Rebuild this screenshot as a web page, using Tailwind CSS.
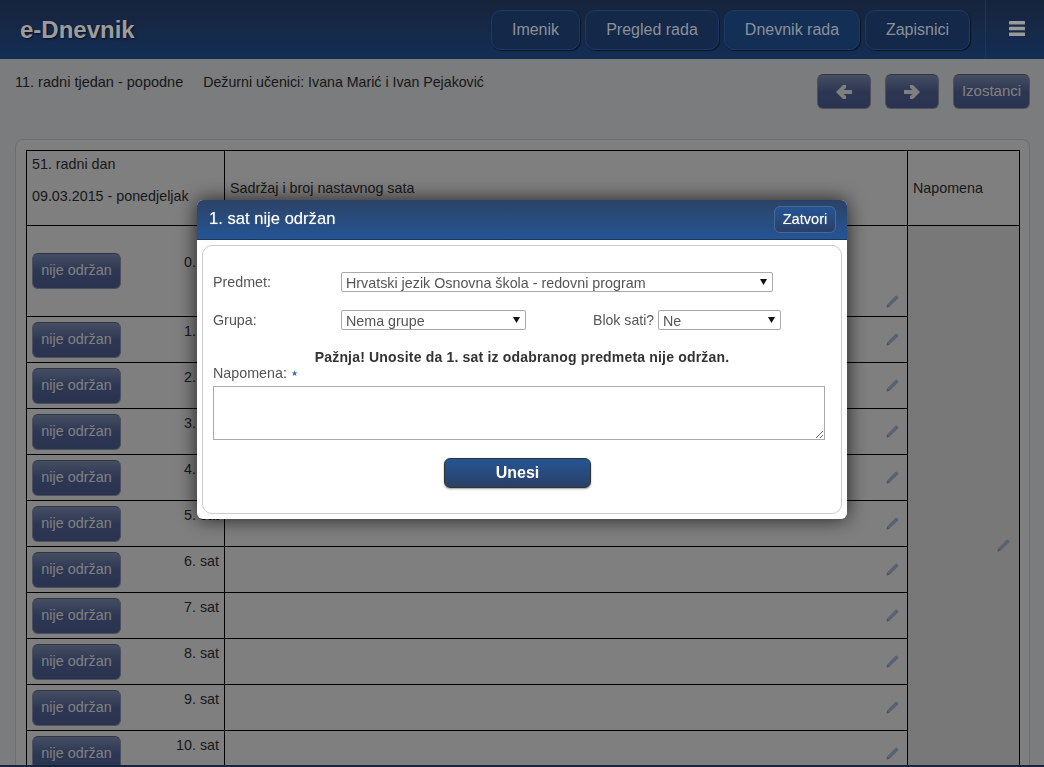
<!DOCTYPE html>
<html lang="hr">
<head>
<meta charset="utf-8">
<title>e-Dnevnik</title>
<script src="https://cdn.jsdelivr.net/npm/@tailwindcss/browser@4"></script>
</head>
<body class="h-[767px] overflow-hidden bg-[#f6f8fa] font-['Liberation_Sans',Arial,sans-serif] text-[14.3px] text-[#333]">
<div class="flex h-[767px] flex-col overflow-hidden">
  <header class="relative z-20 flex h-[59px] shrink-0 items-center bg-gradient-to-b from-[#17233a] to-[#132e55]">
    <span class="ml-5 text-[24px] font-bold text-[#9c9c9c] [text-shadow:1px_1px_2px_#0a1120]">e-Dnevnik</span>
    <nav class="ml-auto flex gap-[5px] text-[16px] text-[#8b9097]">
      <a class="flex h-10 w-[89px] items-center justify-center rounded-[10px] border border-[#1b3a66] bg-[#14294a] shadow-[1px_1px_1px_#0a1526]">Imenik</a>
      <a class="flex h-10 w-[134px] items-center justify-center rounded-[10px] border border-[#1b3a66] bg-[#14294a] shadow-[1px_1px_1px_#0a1526]">Pregled rada</a>
      <a class="flex h-10 w-[136px] items-center justify-center rounded-[10px] border border-[#1b3a66] bg-[#132f56] shadow-[1px_1px_1px_#0a1526]">Dnevnik rada</a>
      <a class="flex h-10 w-[105px] items-center justify-center rounded-[10px] border border-[#1b3a66] bg-[#14294a] shadow-[1px_1px_1px_#0a1526]">Zapisnici</a>
    </nav>
    <div class="ml-[15px] flex h-full w-[59px] items-center border-l border-[#1a3560] pl-[23px]">
      <svg class="mb-[2px]" width="16" height="15" viewBox="0 0 16 15" fill="#9a9a9a"><rect width="16" height="3.5" y="0" rx=".5"/><rect width="16" height="3.5" y="5.7" rx=".5"/><rect width="16" height="3.5" y="11.4" rx=".5"/></svg>
    </div>
  </header>

  <main class="min-h-0 flex-1 overflow-hidden">
    <div class="flex h-[80px] items-start justify-between pl-[15px] pr-[14px] pt-[15px]">
      <p class="-mt-[2px] flex gap-5"><span class="text-[14.5px]">11. radni tjedan - popodne</span><span class="text-[14.2px]">Dežurni učenici: Ivana Marić i Ivan Pejaković</span></p>
      <div class="flex gap-[14px]">
        <button class="flex h-[35px] w-[54px] items-center justify-center rounded-md border border-[#95a0ba] border-t-[#606c8c] bg-gradient-to-b from-[#8a9cc4] via-[#5a6ea6] via-50% to-[#5468a0]">
          <svg width="16" height="16" viewBox="0 0 16 16" fill="#fff"><path d="M0 8 7 1h3v3L7.500 6H16v4H7.500L10 12v3H7z"/></svg>
        </button>
        <button class="flex h-[35px] w-[54px] items-center justify-center rounded-md border border-[#95a0ba] border-t-[#606c8c] bg-gradient-to-b from-[#8a9cc4] via-[#5a6ea6] via-50% to-[#5468a0]">
          <svg class="-ml-[1px]" width="16" height="16" viewBox="0 0 16 16" fill="#fff"><path d="M16 8 9 1H6v3l2.500 2H0v4h8.500L6 12v3h3z"/></svg>
        </button>
        <button class="h-[35px] w-[77px] rounded-md border border-[#95a0ba] border-t-[#606c8c] bg-gradient-to-b from-[#8a9cc4] via-[#5a6ea6] via-50% to-[#5468a0] text-[15px] text-white">Izostanci</button>
      </div>
    </div>

    <section class="ml-[15px] mr-[14px] rounded-lg border border-[#ddd] bg-white pb-[10px] pl-[10px] pr-[11px] pt-[10px]">
      <table class="w-[993px] table-fixed border-collapse border border-black">
        <colgroup><col class="w-[198px]"><col class="w-[683px]"><col class="w-[112px]"></colgroup>
        <thead>
          <tr class="h-[75px] font-normal">
            <th class="border border-black pl-[5px] text-left align-top font-normal"><p class="-mt-[3px] leading-[32px]">51. radni dan</p><p class="leading-[32px]">09.03.2015 - ponedjeljak</p></th>
            <th class="border border-black pl-[5px] pt-[2px] text-left font-normal">Sadržaj i broj nastavnog sata</th>
            <th class="border border-black pl-[5px] pt-[2px] text-left font-normal">Napomena</th>
          </tr>
        </thead>
        <tbody>
          <tr class="h-[91px]">
            <td class="border border-black p-[5px]"><div class="flex items-center justify-between"><button class="h-[36px] w-[89px] rounded-md border border-[#95a0ba] border-t-[#606c8c] bg-gradient-to-b from-[#8a9cc4] via-[#5a6ea6] via-50% to-[#5468a0] text-[14.4px] text-white">nije održan</button><span class="-mt-[1px] self-start">0. sat</span></div></td>
            <td class="border border-black pb-[2px] pr-[8px] align-bottom"><svg class="mb-[6px] ml-auto" width="13" height="13" viewBox="0 0 13 13"><path d="M.5 12.500l.7-3L9.500.8a1 1 0 0 1 1.400 0l1.300 1.300a1 1 0 0 1 0 1.400L3.500 11.800z" fill="#b0c4e8"/><path d="M.5 12.500l.7-3 2.300 2.300z" fill="#b89a9a"/></svg></td>
            <td rowspan="13" class="border border-black bg-[#f0f0f0] pb-[4px] pr-[9px]"><svg class="ml-auto" width="13" height="13" viewBox="0 0 13 13"><path d="M.5 12.500l.7-3L9.500.8a1 1 0 0 1 1.400 0l1.300 1.300a1 1 0 0 1 0 1.400L3.500 11.800z" fill="#b0c4e8"/><path d="M.5 12.500l.7-3 2.300 2.300z" fill="#b89a9a"/></svg></td>
          </tr>
          <tr class="h-[46px]"><td class="border border-black px-[5px]"><div class="flex justify-between"><button class="h-[36px] w-[89px] rounded-md border border-[#95a0ba] border-t-[#606c8c] bg-gradient-to-b from-[#8a9cc4] via-[#5a6ea6] via-50% to-[#5468a0] text-[14.4px] text-white">nije održan</button><span class="-mt-[1px]">1. sat</span></div></td><td class="border border-black pr-[8px] align-middle"><svg class="ml-auto" width="13" height="13" viewBox="0 0 13 13"><path d="M.5 12.500l.7-3L9.500.8a1 1 0 0 1 1.400 0l1.300 1.300a1 1 0 0 1 0 1.400L3.500 11.800z" fill="#b0c4e8"/><path d="M.5 12.500l.7-3 2.300 2.300z" fill="#b89a9a"/></svg></td></tr>
          <tr class="h-[46px]"><td class="border border-black px-[5px]"><div class="flex justify-between"><button class="h-[36px] w-[89px] rounded-md border border-[#95a0ba] border-t-[#606c8c] bg-gradient-to-b from-[#8a9cc4] via-[#5a6ea6] via-50% to-[#5468a0] text-[14.4px] text-white">nije održan</button><span class="-mt-[1px]">2. sat</span></div></td><td class="border border-black pr-[8px] align-middle"><svg class="ml-auto" width="13" height="13" viewBox="0 0 13 13"><path d="M.5 12.500l.7-3L9.500.8a1 1 0 0 1 1.400 0l1.300 1.300a1 1 0 0 1 0 1.400L3.500 11.800z" fill="#b0c4e8"/><path d="M.5 12.500l.7-3 2.300 2.300z" fill="#b89a9a"/></svg></td></tr>
          <tr class="h-[46px]"><td class="border border-black px-[5px]"><div class="flex justify-between"><button class="h-[36px] w-[89px] rounded-md border border-[#95a0ba] border-t-[#606c8c] bg-gradient-to-b from-[#8a9cc4] via-[#5a6ea6] via-50% to-[#5468a0] text-[14.4px] text-white">nije održan</button><span class="-mt-[1px]">3. sat</span></div></td><td class="border border-black pr-[8px] align-middle"><svg class="ml-auto" width="13" height="13" viewBox="0 0 13 13"><path d="M.5 12.500l.7-3L9.500.8a1 1 0 0 1 1.400 0l1.300 1.300a1 1 0 0 1 0 1.400L3.500 11.800z" fill="#b0c4e8"/><path d="M.5 12.500l.7-3 2.300 2.300z" fill="#b89a9a"/></svg></td></tr>
          <tr class="h-[46px]"><td class="border border-black px-[5px]"><div class="flex justify-between"><button class="h-[36px] w-[89px] rounded-md border border-[#95a0ba] border-t-[#606c8c] bg-gradient-to-b from-[#8a9cc4] via-[#5a6ea6] via-50% to-[#5468a0] text-[14.4px] text-white">nije održan</button><span class="-mt-[1px]">4. sat</span></div></td><td class="border border-black pr-[8px] align-middle"><svg class="ml-auto" width="13" height="13" viewBox="0 0 13 13"><path d="M.5 12.500l.7-3L9.500.8a1 1 0 0 1 1.400 0l1.300 1.300a1 1 0 0 1 0 1.400L3.500 11.800z" fill="#b0c4e8"/><path d="M.5 12.500l.7-3 2.300 2.300z" fill="#b89a9a"/></svg></td></tr>
          <tr class="h-[46px]"><td class="border border-black px-[5px]"><div class="flex justify-between"><button class="h-[36px] w-[89px] rounded-md border border-[#95a0ba] border-t-[#606c8c] bg-gradient-to-b from-[#8a9cc4] via-[#5a6ea6] via-50% to-[#5468a0] text-[14.4px] text-white">nije održan</button><span class="-mt-[1px]">5. sat</span></div></td><td class="border border-black pr-[8px] align-middle"><svg class="ml-auto" width="13" height="13" viewBox="0 0 13 13"><path d="M.5 12.500l.7-3L9.500.8a1 1 0 0 1 1.400 0l1.300 1.300a1 1 0 0 1 0 1.400L3.500 11.800z" fill="#b0c4e8"/><path d="M.5 12.500l.7-3 2.300 2.300z" fill="#b89a9a"/></svg></td></tr>
          <tr class="h-[46px]"><td class="border border-black px-[5px]"><div class="flex justify-between"><button class="h-[36px] w-[89px] rounded-md border border-[#95a0ba] border-t-[#606c8c] bg-gradient-to-b from-[#8a9cc4] via-[#5a6ea6] via-50% to-[#5468a0] text-[14.4px] text-white">nije održan</button><span class="-mt-[1px]">6. sat</span></div></td><td class="border border-black pr-[8px] align-middle"><svg class="ml-auto" width="13" height="13" viewBox="0 0 13 13"><path d="M.5 12.500l.7-3L9.500.8a1 1 0 0 1 1.400 0l1.300 1.300a1 1 0 0 1 0 1.400L3.500 11.800z" fill="#b0c4e8"/><path d="M.5 12.500l.7-3 2.300 2.300z" fill="#b89a9a"/></svg></td></tr>
          <tr class="h-[46px]"><td class="border border-black px-[5px]"><div class="flex justify-between"><button class="h-[36px] w-[89px] rounded-md border border-[#95a0ba] border-t-[#606c8c] bg-gradient-to-b from-[#8a9cc4] via-[#5a6ea6] via-50% to-[#5468a0] text-[14.4px] text-white">nije održan</button><span class="-mt-[1px]">7. sat</span></div></td><td class="border border-black pr-[8px] align-middle"><svg class="ml-auto" width="13" height="13" viewBox="0 0 13 13"><path d="M.5 12.500l.7-3L9.500.8a1 1 0 0 1 1.400 0l1.300 1.300a1 1 0 0 1 0 1.400L3.500 11.800z" fill="#b0c4e8"/><path d="M.5 12.500l.7-3 2.300 2.300z" fill="#b89a9a"/></svg></td></tr>
          <tr class="h-[46px]"><td class="border border-black px-[5px]"><div class="flex justify-between"><button class="h-[36px] w-[89px] rounded-md border border-[#95a0ba] border-t-[#606c8c] bg-gradient-to-b from-[#8a9cc4] via-[#5a6ea6] via-50% to-[#5468a0] text-[14.4px] text-white">nije održan</button><span class="-mt-[1px]">8. sat</span></div></td><td class="border border-black pr-[8px] align-middle"><svg class="ml-auto" width="13" height="13" viewBox="0 0 13 13"><path d="M.5 12.500l.7-3L9.500.8a1 1 0 0 1 1.400 0l1.300 1.300a1 1 0 0 1 0 1.400L3.500 11.800z" fill="#b0c4e8"/><path d="M.5 12.500l.7-3 2.300 2.300z" fill="#b89a9a"/></svg></td></tr>
          <tr class="h-[46px]"><td class="border border-black px-[5px]"><div class="flex justify-between"><button class="h-[36px] w-[89px] rounded-md border border-[#95a0ba] border-t-[#606c8c] bg-gradient-to-b from-[#8a9cc4] via-[#5a6ea6] via-50% to-[#5468a0] text-[14.4px] text-white">nije održan</button><span class="-mt-[1px]">9. sat</span></div></td><td class="border border-black pr-[8px] align-middle"><svg class="ml-auto" width="13" height="13" viewBox="0 0 13 13"><path d="M.5 12.500l.7-3L9.500.8a1 1 0 0 1 1.400 0l1.300 1.300a1 1 0 0 1 0 1.400L3.500 11.800z" fill="#b0c4e8"/><path d="M.5 12.500l.7-3 2.300 2.300z" fill="#b89a9a"/></svg></td></tr>
          <tr class="h-[46px]"><td class="border border-black px-[5px]"><div class="flex justify-between"><button class="h-[36px] w-[89px] rounded-md border border-[#95a0ba] border-t-[#606c8c] bg-gradient-to-b from-[#8a9cc4] via-[#5a6ea6] via-50% to-[#5468a0] text-[14.4px] text-white">nije održan</button><span class="-mt-[1px]">10. sat</span></div></td><td class="border border-black pr-[8px] align-middle"><svg class="ml-auto" width="13" height="13" viewBox="0 0 13 13"><path d="M.5 12.500l.7-3L9.500.8a1 1 0 0 1 1.400 0l1.300 1.300a1 1 0 0 1 0 1.400L3.500 11.800z" fill="#b0c4e8"/><path d="M.5 12.500l.7-3 2.300 2.300z" fill="#b89a9a"/></svg></td></tr>
          <tr class="h-[46px]"><td class="border border-black px-[5px]"></td><td class="border border-black"></td></tr>
          <tr class="h-[46px]"><td class="border border-black px-[5px]"></td><td class="border border-black"></td></tr>
        </tbody>
      </table>
    </section>
  </main>
  <footer class="relative z-20 h-[2px] shrink-0 bg-[#17263c]"></footer>
</div>

<div class="fixed inset-0 z-10 bg-black/50"></div>

<div role="dialog" class="fixed left-[197px] top-[200px] z-30 h-[319px] w-[650px] rounded-md bg-white shadow-[0_0_20px_rgba(0,0,0,0.75)]">
  <div class="flex h-10 items-center justify-between rounded-t-md border-b border-[#1c3558] bg-gradient-to-b from-[#2b4266] to-[#235595] pl-3 pr-[11px]">
    <h2 class="text-[16.6px] text-white [text-shadow:0_0_1px_rgba(255,255,255,0.5)]">1. sat nije održan</h2>
    <button class="h-[27px] w-[62px] rounded-md border border-[#4a6a96] bg-gradient-to-b from-[#235595] to-[#2a4066] text-[14.6px] text-white [text-shadow:0_0_1px_rgba(255,255,255,0.5)]">Zatvori</button>
  </div>
  <form class="mx-[5px] mt-[5px] h-[269px] rounded-[10px] border border-[#ccc] px-[10px] pt-[27px] text-[#555]">
    <div class="flex h-5 items-center">
      <label class="w-[128px]">Predmet:</label>
      <div class="relative w-[432px]"><select class="h-5 w-full appearance-none rounded-[2px] border border-[#a9a9a9] bg-white py-0 pl-1 text-[#555]"><option>Hrvatski jezik Osnovna škola - redovni program</option></select><svg class="pointer-events-none absolute right-[6px] top-[7px]" width="7" height="6" viewBox="0 0 7 6"><path d="M0 0h7L3.500 6z" fill="#111"/></svg></div>
    </div>
    <div class="mt-[18px] flex h-5 items-center">
      <label class="w-[128px]">Grupa:</label>
      <div class="relative w-[185px]"><select class="h-5 w-full appearance-none rounded-[2px] border border-[#a9a9a9] bg-white py-0 pl-1 text-[#555]"><option>Nema grupe</option></select><svg class="pointer-events-none absolute right-[6px] top-[7px]" width="7" height="6" viewBox="0 0 7 6"><path d="M0 0h7L3.500 6z" fill="#111"/></svg></div>
      <label class="ml-[67px] w-[65px] text-[14.1px]">Blok sati?</label>
      <div class="relative w-[123px]"><select class="h-5 w-full appearance-none rounded-[2px] border border-[#a9a9a9] bg-white py-0 pl-1 text-[#555]"><option>Ne</option></select><svg class="pointer-events-none absolute right-[6px] top-[7px]" width="7" height="6" viewBox="0 0 7 6"><path d="M0 0h7L3.500 6z" fill="#111"/></svg></div>
    </div>
    <p class="mt-[18px] h-4 text-center text-[14px] font-bold leading-4 tracking-[0.18px] text-[#333]">Pažnja! Unosite da 1. sat iz odabranog predmeta nije održan.</p>
    <label class="-mt-[1px] flex h-[20px] items-center gap-1">Napomena: <span class="text-[8px] leading-none text-[#3a6ea8]">★</span></label>
    <textarea class="mt-[2px] block h-[54px] w-[612px] border border-[#aaa] bg-white"></textarea>
    <div class="mt-[18px] pl-[231px]">
      <button class="h-[30px] w-[147px] rounded-md border border-[#333] bg-gradient-to-b from-[#235595] to-[#2a4066] text-[16px] font-bold text-white shadow-[0_1px_2px_rgba(0,0,0,0.4)]">Unesi</button>
    </div>
  </form>
</div>
</body>
</html>
